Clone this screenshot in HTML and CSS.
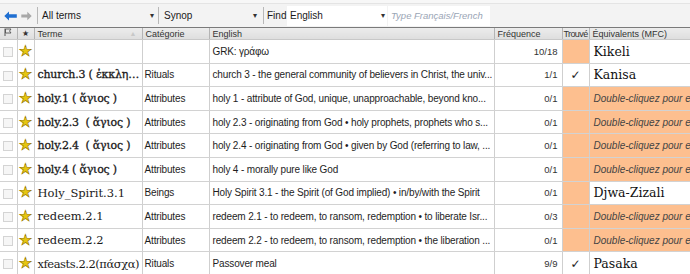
FILE: index.html
```html
<!DOCTYPE html>
<html lang="fr">
<head>
<meta charset="utf-8">
<title>Terms</title>
<link rel="stylesheet" href="styles.css">
</head>
<body>
<div class="topstrip"></div>
<div class="toolbar">
  <span class="navbtn nav-back">
    <svg width="13" height="10" viewBox="0 0 13 10"><path d="M0.3 5 L5 0.6 L5 3.3 L12.8 3.3 L12.8 6.7 L5 6.7 L5 9.4 Z" fill="#1f6fd1"/></svg>
  </span>
  <span class="navbtn nav-fwd">
    <svg width="11" height="10" viewBox="0 0 11 10"><path d="M10.7 5 L6.3 0.8 L6.3 3.4 L0.3 3.4 L0.3 6.6 L6.3 6.6 L6.3 9.2 Z" fill="#a8a8a8"/></svg>
  </span>
  <span class="sep sep1"></span>
  <span class="combo combo-terms">All terms<span class="caret">▾</span></span>
  <span class="sep sep2"></span>
  <span class="combo combo-synop">Synop<span class="caret">▾</span></span>
  <span class="sep sep3"></span>
  <span class="findlbl">Find</span>
  <span class="field field-lang">English<span class="caret">▾</span></span>
  <span class="field field-search">Type Français/French</span>
</div>
<table class="grid">
  <colgroup>
    <col class="c-chk"><col class="c-star"><col class="c-term"><col class="c-cat"><col class="c-eng"><col class="c-freq"><col class="c-found"><col class="c-equiv">
  </colgroup>
  <thead>
    <tr>
      <th class="h-icon"><svg width="9" height="8" viewBox="0 0 9 8"><path d="M1 0.5 V8" stroke="#555" stroke-width="1"/><path d="M1.5 1 H7 L5.5 3 L7 5 H1.5 Z" fill="none" stroke="#555" stroke-width="0.9"/></svg></th>
      <th class="h-icon">★</th>
      <th class="h-term">Terme<span class="sortarrow">▲</span></th>
      <th>Catégorie</th>
      <th>English</th>
      <th>Fréquence</th>
      <th class="h-found">Trouvé</th>
      <th>Équivalents (MFC)</th>
    </tr>
  </thead>
  <tbody>
    <tr>
      <td class="chk"><span class="box"></span></td><td class="star"><span class="gstar">★</span></td>
      <td class="term"></td><td class="cat"></td>
      <td class="eng">GRK: γράφω</td><td class="freq">10/18</td><td class="found miss"></td><td class="equiv">Kikeli</td>
    </tr>
    <tr>
      <td class="chk"><span class="box"></span></td><td class="star"><span class="gstar">★</span></td>
      <td class="term">church.3 ( ἐκκλησία )</td><td class="cat">Rituals</td>
      <td class="eng">church 3 - the general community of believers in Christ, the univ...</td><td class="freq">1/1</td><td class="found">✓</td><td class="equiv">Kanisa</td>
    </tr>
    <tr>
      <td class="chk"><span class="box"></span></td><td class="star"><span class="gstar">★</span></td>
      <td class="term">holy.1 ( ἅγιος )</td><td class="cat">Attributes</td>
      <td class="eng">holy 1 - attribute of God, unique, unapproachable, beyond kno...</td><td class="freq">0/1</td><td class="found miss"></td><td class="equiv miss hint">Double-cliquez pour entrer</td>
    </tr>
    <tr>
      <td class="chk"><span class="box"></span></td><td class="star"><span class="gstar">★</span></td>
      <td class="term">holy.2.3 &nbsp;( ἅγιος )</td><td class="cat">Attributes</td>
      <td class="eng">holy 2.3 - originating from God • holy prophets, prophets who s...</td><td class="freq">0/1</td><td class="found miss"></td><td class="equiv miss hint">Double-cliquez pour entrer</td>
    </tr>
    <tr>
      <td class="chk"><span class="box"></span></td><td class="star"><span class="gstar">★</span></td>
      <td class="term">holy.2.4 &nbsp;( ἅγιος )</td><td class="cat">Attributes</td>
      <td class="eng">holy 2.4 - originating from God • given by God (referring to law, ...</td><td class="freq">0/1</td><td class="found miss"></td><td class="equiv miss hint">Double-cliquez pour entrer</td>
    </tr>
    <tr>
      <td class="chk"><span class="box"></span></td><td class="star"><span class="gstar">★</span></td>
      <td class="term">holy.4 ( ἅγιος )</td><td class="cat">Attributes</td>
      <td class="eng">holy 4 - morally pure like God</td><td class="freq">0/1</td><td class="found miss"></td><td class="equiv miss hint">Double-cliquez pour entrer</td>
    </tr>
    <tr>
      <td class="chk"><span class="box"></span></td><td class="star"><span class="gstar">★</span></td>
      <td class="term light">Holy_Spirit.3.1</td><td class="cat">Beings</td>
      <td class="eng">Holy Spirit 3.1 - the Spirit (of God implied) • in/by/with the Spirit</td><td class="freq">0/1</td><td class="found miss"></td><td class="equiv">Djwa-Zizali</td>
    </tr>
    <tr>
      <td class="chk"><span class="box"></span></td><td class="star"><span class="gstar">★</span></td>
      <td class="term light">redeem.2.1</td><td class="cat">Attributes</td>
      <td class="eng">redeem 2.1 - to redeem, to ransom, redemption • to liberate Isr...</td><td class="freq">0/3</td><td class="found miss"></td><td class="equiv miss hint">Double-cliquez pour entrer</td>
    </tr>
    <tr>
      <td class="chk"><span class="box"></span></td><td class="star"><span class="gstar">★</span></td>
      <td class="term light">redeem.2.2</td><td class="cat">Attributes</td>
      <td class="eng">redeem 2.2 - to redeem, to ransom, redemption • the liberation ...</td><td class="freq">0/1</td><td class="found miss"></td><td class="equiv miss hint">Double-cliquez pour entrer</td>
    </tr>
    <tr>
      <td class="chk"><span class="box"></span></td><td class="star"><span class="gstar">★</span></td>
      <td class="term light tight">xfeasts.2.2(πάσχα)</td><td class="cat">Rituals</td>
      <td class="eng">Passover meal</td><td class="freq">9/9</td><td class="found">✓</td><td class="equiv">Pasaka</td>
    </tr>
  </tbody>
</table>
</body>
</html>
```

FILE: styles.css
```css
html, body {
  margin: 0;
  padding: 0;
  background: #ffffff;
  overflow: hidden;
}
body {
  width: 690px;
  height: 274px;
  font-family: "Liberation Sans", Arial, sans-serif;
}
.topstrip {
  height: 3px;
  background: #f7f7f7;
  border-bottom: 1px solid #e4e4e4;
}
.toolbar {
  height: 23px;
  background: #f3f3f3;
  display: flex;
  align-items: center;
  border-bottom: 1px solid #7a7a7a;
  font-size: 10px;
  color: #1a1a1a;
  white-space: nowrap;
}
.navbtn {
  display: flex;
  align-items: center;
  justify-content: center;
  flex: none;
}
.nav-back { margin-left: 4px; width: 13px; }
.nav-fwd { margin-left: 4px; width: 11px; }
.sep {
  flex: none;
  width: 1px;
  height: 17px;
  background: #b8b8b8;
}
.sep1 { margin: 0 4px 0 5px; }
.sep2 { margin: 0 5px 0 2px; }
.sep3 { margin: 0 3px 0 4px; }
.combo {
  flex: none;
  display: flex;
  align-items: center;
  justify-content: space-between;
  box-sizing: border-box;
}
.combo-terms { width: 114px; }
.combo-synop { width: 95px; }
.caret {
  font-size: 8px;
  color: #333;
  margin-right: 2px;
}
.findlbl {
  flex: none;
  width: 20px;
}
.field {
  flex: none;
  height: 20px;
  background: #ffffff;
  display: flex;
  align-items: center;
  box-sizing: border-box;
  padding-left: 3px;
}
.field-lang {
  width: 100px;
  justify-content: space-between;
  margin-right: 1px;
}
.field-search {
  width: 102px;
  font-style: italic;
  color: #9aa5b5;
  font-size: 9.5px;
  overflow: hidden;
}
.grid {
  border-collapse: collapse;
  table-layout: fixed;
  width: 690px;
}
.c-chk { width: 17px; }
.c-star { width: 17px; }
.c-term { width: 108px; }
.c-cat { width: 67px; }
.c-eng { width: 285px; }
.c-freq { width: 68px; }
.c-found { width: 27px; }
.c-equiv { width: 101px; }
.grid th {
  height: 10px;
  padding: 0 0 0 3px;
  font-weight: normal;
  font-size: 9px;
  color: #333;
  text-align: left;
  background: linear-gradient(#ececec, #dedede);
  border-right: 1px solid #b4b4b4;
  border-bottom: 1px solid #c8c8c8;
  white-space: nowrap;
  overflow: hidden;
  line-height: 10px;
}
.grid th.h-icon {
  padding: 0;
  text-align: center;
  font-size: 8px;
}
.grid th.h-term {
  position: relative;
}
.sortarrow {
  position: absolute;
  right: 5px;
  top: 1px;
  font-size: 7px;
  color: #c8c8c8;
}
.grid th.h-found {
  padding-left: 1px;
  letter-spacing: -0.6px;
}
.grid td {
  height: 22.6px;
  padding: 0 0 0 3px;
  border-right: 1px solid #cfcfcf;
  border-bottom: 1px solid #d2d2d2;
  white-space: nowrap;
  overflow: hidden;
  font-size: 10px;
  letter-spacing: -0.15px;
  color: #1e1e1e;
}
.grid td.cat {
  padding-left: 2px;
}
.grid td.chk {
  padding: 0;
  text-align: center;
}
.box {
  display: inline-block;
  width: 8px;
  height: 8px;
  border: 1px solid #d4d4d4;
  background: #f6f6f6;
  vertical-align: middle;
}
.grid td.star {
  padding: 0;
  text-align: center;
}
.gstar {
  font-family: "DejaVu Sans", sans-serif;
  font-size: 15px;
  color: #e6c610;
  -webkit-text-stroke: 0.6px #9a7a00;
  line-height: 1;
}
.grid td.term {
  font-family: "DejaVu Serif", "Liberation Serif", serif;
  font-size: 11px;
  color: #1a1a1a;
  letter-spacing: -0.2px;
  -webkit-text-stroke: 0.3px #1a1a1a;
  text-overflow: ellipsis;
}
.grid td.term.light {
  -webkit-text-stroke: 0;
  font-size: 11.5px;
  letter-spacing: 0;
}
.grid td.term.tight {
  letter-spacing: -0.45px;
}
.grid td.freq {
  text-align: right;
  padding: 0 4px 0 0;
  font-size: 9.5px;
  letter-spacing: 0;
  color: #333;
}
.grid td.found {
  padding: 0;
  text-align: center;
  font-family: "DejaVu Sans", sans-serif;
  font-size: 12px;
  color: #222;
}
.grid td.miss {
  background: #fdbf8f;
}
.grid td.equiv {
  font-family: "DejaVu Serif", "Liberation Serif", serif;
  font-size: 12.5px;
  color: #111;
  padding-left: 4px;
  letter-spacing: 0;
  border-right: none;
}
.grid td.equiv.hint {
  font-family: "Liberation Sans", Arial, sans-serif;
  font-style: italic;
  font-size: 10px;
  color: #444;
  letter-spacing: 0;
}
```
